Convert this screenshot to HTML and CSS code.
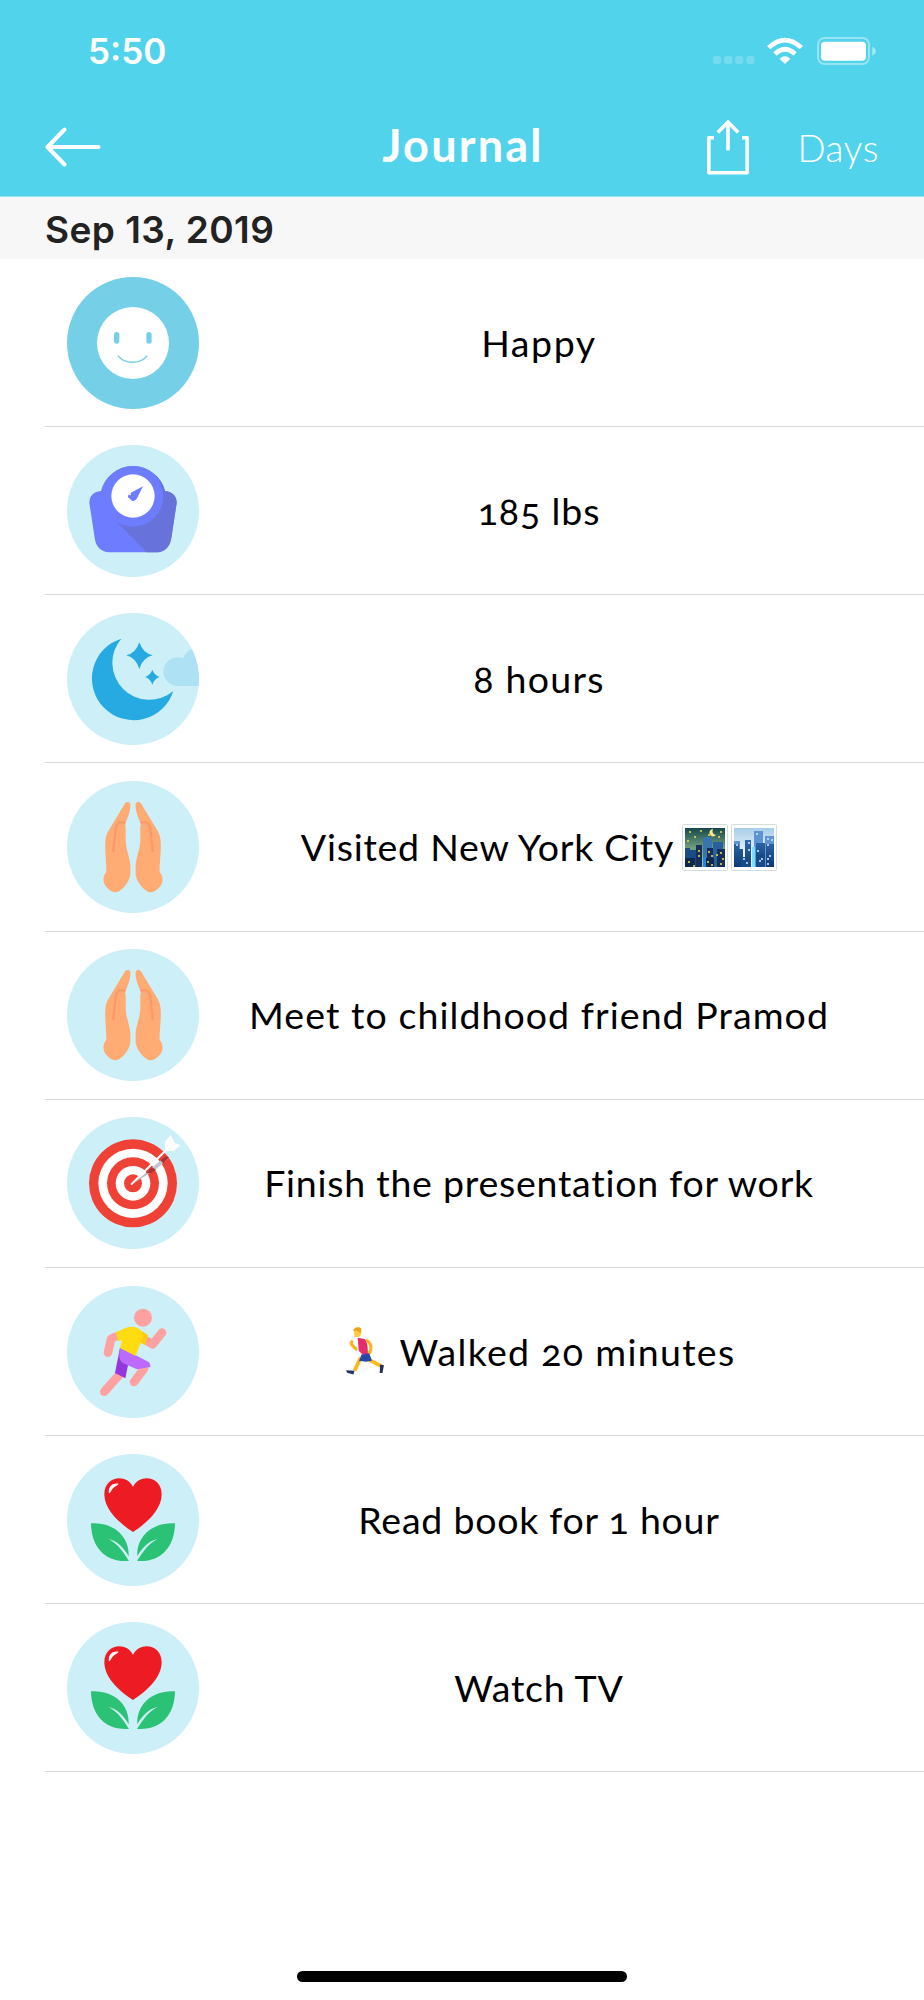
FILE: index.html
```html
<!DOCTYPE html>
<html lang="en">
<head>
  <meta charset="UTF-8">
  <meta name="viewport" content="width=device-width, initial-scale=1.0">
  <title>Journal</title>
  <link rel="stylesheet" href="styles.css">
</head>
<body>
  <!-- shared icons -->
  <svg class="defs" width="0" height="0">
    <symbol id="icon-hands" viewBox="81 48 396 396">
      <circle cx="279" cy="246" r="198" fill="#cdeff8"/>
      <g id="hand">
        <path d="M254 117C259 109 268 109 271 117C272 131 269 146 255 177C258 184 257 196 257 224C258 255 269 274 271 300V330C266 355 246 376 232 381C220 384 204 376 193 357C188 344 190 331 199 321C200 300 194 255 196 230C197 211 202 202 209 191Z" fill="#ffab73"/>
        <path d="M220 262C221 240 225 214 227 192C229 174 240 166 256 175" fill="none" stroke="#fb9a69" stroke-width="7"/>
      </g>
      <use href="#hand" transform="matrix(-1 0 0 1 558 0)"/>
    </symbol>
    <symbol id="icon-flower" viewBox="81 41 396 396">
      <circle cx="279" cy="239" r="198" fill="#cdeff8"/>
      <path d="M279 275C246 254 193 212 193 162C193 108 258 98 279 139C300 98 365 108 365 162C365 212 312 254 279 275Z" fill="#ed1c24"/>
      <path d="M207 159C203 142 216 126 236 130C232 137 225 136 219 144C213 150 213 157 207 159Z" fill="#fff"/>
      <g id="leaf">
        <path d="M153 249C222 245 269 289 266 348C253 324 231 301 206 296C232 311 247 330 267 362C195 367 154 320 153 249Z" fill="#2cc275"/>
      </g>
      <use href="#leaf" transform="matrix(-1 0 0 1 558 0)"/>
    </symbol>
  </svg>

  <header class="header">
    <div class="status">
      <span class="time">5:50</span>
      <div class="status-icons">
        <svg class="signal" width="42" height="8" viewBox="0 0 42 8" fill="#fff" opacity=".2">
          <rect width="8" height="8" rx="2.5"/><rect x="11.2" width="8" height="8" rx="2.5"/><rect x="22.3" width="8" height="8" rx="2.5"/><rect x="33.4" width="8" height="8" rx="2.5"/>
        </svg>
        <svg class="wifi" width="38" height="28" viewBox="0 0 114 84" fill="#fff">
          <path d="M3 27Q57-23 111 27L101 37Q57-4 13 37Z"/>
          <path d="M22 46Q57 13 92 46L82 56Q57 33 32 56Z"/>
          <path d="M41 65Q57 51 73 65L57 81Z"/>
        </svg>
        <svg class="battery" width="60" height="28" viewBox="0 0 60 28">
          <rect x="1" y="1" width="51" height="26" rx="6.5" fill="none" stroke="#fff" stroke-opacity=".4" stroke-width="2"/>
          <rect x="4" y="4.8" width="45" height="19" rx="4" fill="#fff"/>
          <path d="M55.3 9.7Q58.7 11.5 58.7 14.2T55.3 18.8Z" fill="#fff" opacity=".5"/>
        </svg>
      </div>
    </div>
    <nav class="nav">
      <svg class="back" width="56" height="40" viewBox="0 0 56 40" fill="none" stroke="#fff" stroke-width="4" stroke-linecap="round" stroke-linejoin="round">
        <path d="M53.5 20H2.5M19.5 2.5L2.5 20L19.5 37.5"/>
      </svg>
      <h1>Journal</h1>
      <svg class="share" width="42" height="56" viewBox="0 0 42 56" fill="none" stroke="#fff" stroke-width="3.6">
        <path d="M7 18.8H1.8V53.7H40.2V18.8H35" stroke-linejoin="round"/>
        <path d="M21 31.5V3M10.8 13.4L21 3L31.2 13.4"/>
      </svg>
      <span class="days">Days</span>
    </nav>
  </header>

  <h2 class="date">Sep 13, 2019</h2>

  <main class="entries">
    <div class="entry">
      <svg class="icon" viewBox="81 50 396 396">
        <circle cx="279" cy="248" r="198" fill="#75cfe7"/>
        <circle cx="279" cy="248" r="108" fill="#fff"/>
        <rect x="222" y="215" width="16" height="35" rx="8" fill="#75cfe7"/>
        <rect x="319" y="215" width="16" height="35" rx="8" fill="#75cfe7"/>
        <path d="M234 286Q248 306 278 306T321 286" fill="none" stroke="#75cfe7" stroke-width="4.5"/>
      </svg>
      <p class="mood">Happy</p>
    </div>
    <div class="entry">
      <svg class="icon" viewBox="81 44 396 396">
        <circle cx="279" cy="242" r="198" fill="#cdeff8"/>
        <path d="M183 182A99 99 0 0 1 375 182Q410 187 410 218L394 322Q388 362 352 366H207Q169 362 164 322L148 218Q148 186 183 182Z" fill="#6e7cff"/>
        <path d="M226 270L320 366H352Q388 362 394 322L410 218Q410 187 375 182Q368 153 345 134Z" fill="#6773da"/>
        <circle cx="279" cy="198" r="91" fill="#6e7cff"/>
        <circle cx="279" cy="197" r="65" fill="#fff"/>
        <path d="M309 168L291 204Q286 214 277 212L264 201Q263 192 273 187Z" fill="#6e7cff"/>
        <circle cx="270" cy="192" r="3" fill="#fff"/>
      </svg>
      <p class="weight">185 lbs</p>
    </div>
    <div class="entry">
      <svg class="icon" viewBox="81 38 396 396">
        <clipPath id="disc"><circle cx="279" cy="236" r="198"/></clipPath>
        <circle cx="279" cy="236" r="198" fill="#cdeff8"/>
        <path d="M480 257H414A43 43 0 1 1 429 174Q436 154 460 143H480Z" fill="#aee1f4" clip-path="url(#disc)"/>
        <path d="M244 115A125 125 0 1 0 400 272A111 111 0 0 1 244 115Z" fill="#27a9e1"/>
        <path d="M298 126Q308 158 338 165Q308 173 298 206Q288 173 259 165Q288 158 298 126ZM337 208Q343 225 359 230Q343 235 337 253Q331 235 315 230Q331 225 337 208Z" fill="#27a9e1"/>
      </svg>
      <p class="sleep">8 hours</p>
    </div>
    <div class="entry">
      <svg class="icon"><use href="#icon-hands"/></svg>
      <p>Visited New York City
        <svg class="night" width="46" height="47" viewBox="0 0 46 47">
          <defs>
            <linearGradient id="night-sky" x2="0" y2="1"><stop offset="0" stop-color="#14484f"/><stop offset=".5" stop-color="#6d9d79"/><stop offset="1" stop-color="#b1c887"/></linearGradient>
          </defs>
          <rect x=".5" y=".5" width="45" height="46" rx="1" fill="#fff" stroke="#d3dede"/>
          <path d="M3 4H43V43H3Z" fill="url(#night-sky)"/>
          <path d="M21 13H30V43H21Z" fill="#3a74ae"/>
          <path d="M31 18H41V25H43V43H31Z" fill="#285f9f"/>
          <path d="M3 24H8V26H14V21H20V43H3Z" fill="#194c87"/>
          <path d="M14 21H20V43H14ZM25 24H31V43H25ZM35 25H43V43H35Z" fill="#172f56"/>
          <path d="M3 34H13V43H3ZM24 34H32V43H24Z" fill="#10284b"/>
          <path d="M21 33H24V43H21Z" fill="#2084ed"/>
          <path d="M31 5A3.7 3.7 0 1 0 34 11Q29 10 31 5Z" fill="#ffe98a"/>
          <path d="M7 7h2v2H7zM18 6h2v2h-2zM38 7h2v2h-2zM5 16h2v2H5zM12 12h2v2h-2zM26 10h2v2h-2zM36 12h2v2h-2zM16 26h2v2h-2zM16 31h2v2h-2zM6 37h2v2H6zM11 41h2v2h-2zM26 27h2v2h-2zM29 31h2v2h-2zM25 37h2v2h-2zM29 40h2v2h-2zM38 28h2v2h-2zM40 34h2v2h-2zM38 39h2v2h-2zM34 30h2v2h-2z" fill="#e9d84d" opacity=".8"/>
        </svg>
        <svg class="city" width="46" height="47" viewBox="0 0 46 47">
          <defs>
            <linearGradient id="day-sky" x2="0" y2="1"><stop offset="0" stop-color="#a7cde9"/><stop offset=".6" stop-color="#e6f3fa"/></linearGradient>
            <linearGradient id="towers" x2="0" y2="1"><stop offset="0" stop-color="#2f68ac"/><stop offset="1" stop-color="#0e3a75"/></linearGradient>
          </defs>
          <rect x=".5" y=".5" width="45" height="46" rx="1" fill="#fff" stroke="#d3dede"/>
          <path d="M3 4H43V43H3Z" fill="url(#day-sky)"/>
          <path d="M23 7H32V43H23ZM34 12H43V43H34ZM3 17H9V43H3Z" fill="#5e94d0"/>
          <path d="M3 20H8V25H12V43H3ZM14 16H20V43H14ZM25 19H34V43H25ZM35 20H43V43H35Z" fill="url(#towers)"/>
          <path d="M10 33H20V43H10ZM25 30H34V43H25Z" fill="#174b87"/>
          <path d="M21 23H24V43H21Z" fill="#76e0f5"/>
          <path d="M5 20h2v2H5zM17 18h2v2h-2zM25 9h2v2h-2zM36 14h2v2h-2zM40 15h2v2h-2zM36 20h2v2h-2zM17 25h2v2h-2zM26 26h2v2h-2zM12 34h2v2h-2zM15 38h2v2h-2zM28 36h2v2h-2zM30 34h2v2h-2zM36 34h2v2h-2zM38 31h2v2h-2zM36 39h2v2h-2z" fill="#c9e6f8" opacity=".8"/>
        </svg>
      </p>
    </div>
    <div class="entry">
      <svg class="icon"><use href="#icon-hands"/></svg>
      <p class="friend">Meet to childhood friend Pramod</p>
    </div>
    <div class="entry">
      <svg class="icon" viewBox="81 36 396 396">
        <circle cx="279" cy="234" r="198" fill="#cdeff8"/>
        <circle cx="279" cy="235" r="132" fill="#ef4136"/>
        <circle cx="279" cy="235" r="104" fill="#fff"/>
        <circle cx="279" cy="235" r="78" fill="#ef4136"/>
        <circle cx="279" cy="235" r="52" fill="#fff"/>
        <circle cx="279" cy="235" r="27" fill="#ef4136"/>
        <path d="M281 234L378 153L386 160L340 199Z" fill="#bfc2cf"/>
        <path d="M319 202L336 187L348 194L333 205H319ZM361 166L377 153L387 157L370 175Z" fill="#b33136"/>
        <path d="M275 237L381 133" stroke="#fff" stroke-width="6" stroke-linecap="round"/>
        <path d="M374 130L376 109L392 91L402 108L403 113L421 121L402 137L382 139Z" fill="#fff"/>
      </svg>
      <p>Finish the presentation for work</p>
    </div>
    <div class="entry">
      <svg class="icon" viewBox="81 45 396 396">
        <circle cx="279" cy="243" r="198" fill="#cdeff8"/>
        <circle cx="309" cy="140" r="27" fill="#ffa1a1"/>
        <g fill="none" stroke="#ffa1a1" stroke-width="26" stroke-linecap="round" stroke-linejoin="round">
          <path d="M237 194Q213 199 213 205L204 245M316 207L338 220L366 185M241 308L193 362M312 293L282 333"/>
        </g>
        <path d="M240 230L264 282L256 322L225 306Z" fill="#9537da"/>
        <path d="M240 230L287 253L326 273Q332 277 331 288L291 295L248 276Q236 266 238 250Z" fill="#bc6aff"/>
        <path d="M228 184L264 168Q278 165 292 170L324 193L316 222L302 215L287 255L240 231L246 208L234 210Z" fill="#ffdc12"/>
        <path d="M305 181L324 193L316 222L302 215Q312 200 305 181Z" fill="#ffc814"/>
      </svg>
      <p class="walk">
        <svg class="runner" width="38" height="48" viewBox="0 0 98 124">
          <path d="M26 57L17 48Q11 43 15 38M54 35Q69 43 62 66L49 65" fill="none" stroke="#f7b51c" stroke-width="8" stroke-linecap="round" stroke-linejoin="round"/>
          <path d="M38 79L22 113M60 85L91 101" stroke="#f9b91f" stroke-width="10"/>
          <path d="M20 6Q29-4 39 4Q42 16 35 25L22 26Z" fill="#ffc83d"/>
          <path d="M20 6Q29-4 39 4L38 16L29 10L18 10Z" fill="#f0a01c"/>
          <path d="M30 28L48 31Q58 43 56 70L43 71L33 62Z" fill="#e52c6d"/>
          <path d="M40 71L60 68L67 87L51 90L35 87L32 92Z" fill="#2948a4"/>
          <path d="M0 112L22 113L19 123L3 118ZM88 97L98 99L94 119H87Z" fill="#243360"/>
        </svg>
        Walked 20 minutes
      </p>
    </div>
    <div class="entry">
      <svg class="icon"><use href="#icon-flower"/></svg>
      <p>Read book for 1 hour</p>
    </div>
    <div class="entry">
      <svg class="icon"><use href="#icon-flower"/></svg>
      <p>Watch TV</p>
    </div>
  </main>

  <footer class="footer"><div class="home-bar"></div></footer>
</body>
</html>
```
FILE: styles.css
```css
* { box-sizing: border-box; }
body {
  margin: 0;
  height: 2000px;
  display: flex;
  flex-direction: column;
  background: #fff;
  color: #000;
  font-family: Lato, sans-serif;
  font-variant-numeric: oldstyle-nums;
}
h1, h2, p { margin: 0; }
svg { display: block; flex: none; }
.defs { position: absolute; }
.header {
  height: 197px;
  background: #52d3ec;
  color: #fff;
  border-bottom: 1px solid #98e3f2;
}
.status {
  height: 99px;
  padding: 3px 47px 0 88px;
  display: flex;
  align-items: center;
  justify-content: space-between;
}
.time {
  font: 600 35px Inter, sans-serif;
}
.status-icons {
  display: flex;
  align-items: center;
}
.signal { margin: 17px 11px 0 0; }
.wifi { margin-right: 13px; }
.nav {
  height: 97px;
  padding: 0 45px;
  display: grid;
  grid-template-columns: 322px 190px 192px 1fr;
  align-items: center;
}
.back { margin-top: -1px; }
h1 {
  padding: 0 0 6px 2px;
  font-size: 45px;
  font-weight: 700;
  letter-spacing: 2.2px;
  text-align: center;
}
.share {
  justify-self: end;
  margin-top: -2px;
}
.days {
  font-size: 37px;
  font-weight: 300;
  letter-spacing: 0.6px;
  text-align: right;
}
.date {
  height: 62px;
  padding-left: 45px;
  background: #f7f7f7;
  color: #222;
  font: 600 37px/66px Inter, sans-serif;
  letter-spacing: 0.45px;
}
.entries { margin-left: 45px; }
.entry {
  height: 168.17px;
  padding: 0 46px 0 22px;
  display: flex;
  align-items: center;
  border-bottom: 1px solid #d9d9d9;
}
.icon {
  width: 132px;
  height: 132px;
}
.entry p {
  flex: 1;
  display: flex;
  justify-content: center;
  align-items: center;
  padding: 0 0 1px 1px;
  font-size: 37.5px;
  letter-spacing: 0.75px;
  white-space: nowrap;
}
.entry .mood { letter-spacing: 1.6px; }
.entry .weight { letter-spacing: 0.9px; }
.entry .sleep { letter-spacing: 1.25px; }
.entry .friend { letter-spacing: 1.06px; }
.entry .walk { letter-spacing: 1.3px; }
.night { margin: 1px 0 0 8px; }
.city { margin: 1px 0 0 3px; }
.runner { margin: 0 16px 0 3px; }
.footer {
  margin-top: auto;
  padding-bottom: 18px;
}
.home-bar {
  width: 330px;
  height: 11px;
  margin: 0 auto;
  border-radius: 6px;
  background: #000;
}
```
